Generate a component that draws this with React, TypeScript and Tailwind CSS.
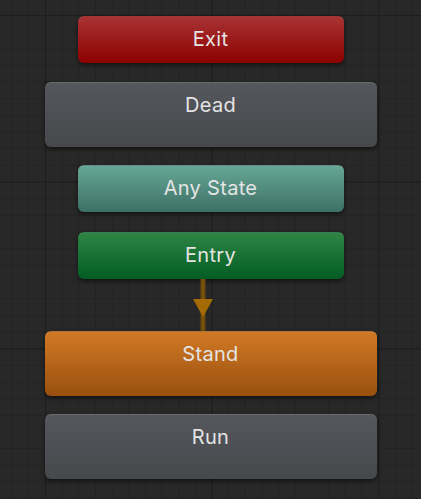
import React from "react";

type NodeProps = {
  label: string;
  size: "sm" | "lg";
  tone: string;
  className?: string;
};

function StateNode({ label, size, tone, className = "" }: NodeProps) {
  const dims = size === "sm" ? "w-[266px] h-[47px]" : "w-[332px] h-[65px]";
  return (
    <div
      className={`${dims} ${tone} ${className} rounded-[6px] border-t border-white/20 shadow-[0_2px_4px_rgba(0,0,0,0.55)] flex justify-center pt-[10px] text-[20px] leading-[24px] tracking-[0.3px] text-[#e4e4e4] [font-family:Inter,'Noto_Sans',sans-serif]`}
    >
      {label}
    </div>
  );
}

function Transition() {
  return (
    <div className="w-full h-[52px] flex justify-center">
      <svg width="40" height="52" viewBox="0 0 40 52" className="-ml-[16px]">
        <rect x="17.5" y="0" width="5" height="52" fill="#6a4a0c" />
        <rect x="19" y="0" width="2" height="52" fill="#7a5508" />
        <polygon points="10,20 30,20 20,38" fill="#a46a03" />
      </svg>
    </div>
  );
}

export default function App() {
  return (
    <div className="w-[421px] h-[499px] overflow-hidden bg-[#282828] bg-[linear-gradient(to_right,#1d1d1d_1px,transparent_1px),linear-gradient(to_bottom,#1d1d1d_1px,transparent_1px),linear-gradient(to_right,#232323_1px,transparent_1px),linear-gradient(to_bottom,#232323_1px,transparent_1px)] [background-size:166.667px_166.667px,166.667px_166.667px,16.667px_16.667px,16.667px_16.667px] [background-position:45px_15px,45px_15px,45px_15px,45px_15px] flex flex-col items-center pt-[16px]">
      <StateNode label="Exit" size="sm" tone="bg-[linear-gradient(to_bottom,#a83333,#8d0000)]" />
      <StateNode label="Dead" size="lg" tone="bg-[linear-gradient(to_bottom,#54575b,#46484c)]" className="mt-[19px]" />
      <StateNode label="Any State" size="sm" tone="bg-[linear-gradient(to_bottom,#66a795,#3d6f65)]" className="mt-[18px]" />
      <StateNode label="Entry" size="sm" tone="bg-[linear-gradient(to_bottom,#2e8544,#035d23)]" className="mt-[20px]" />
      <Transition />
      <StateNode label="Stand" size="lg" tone="bg-[linear-gradient(to_bottom,#d17924,#99500f)]" />
      <StateNode label="Run" size="lg" tone="bg-[linear-gradient(to_bottom,#54575b,#46484c)]" className="mt-[18px]" />
    </div>
  );
}
